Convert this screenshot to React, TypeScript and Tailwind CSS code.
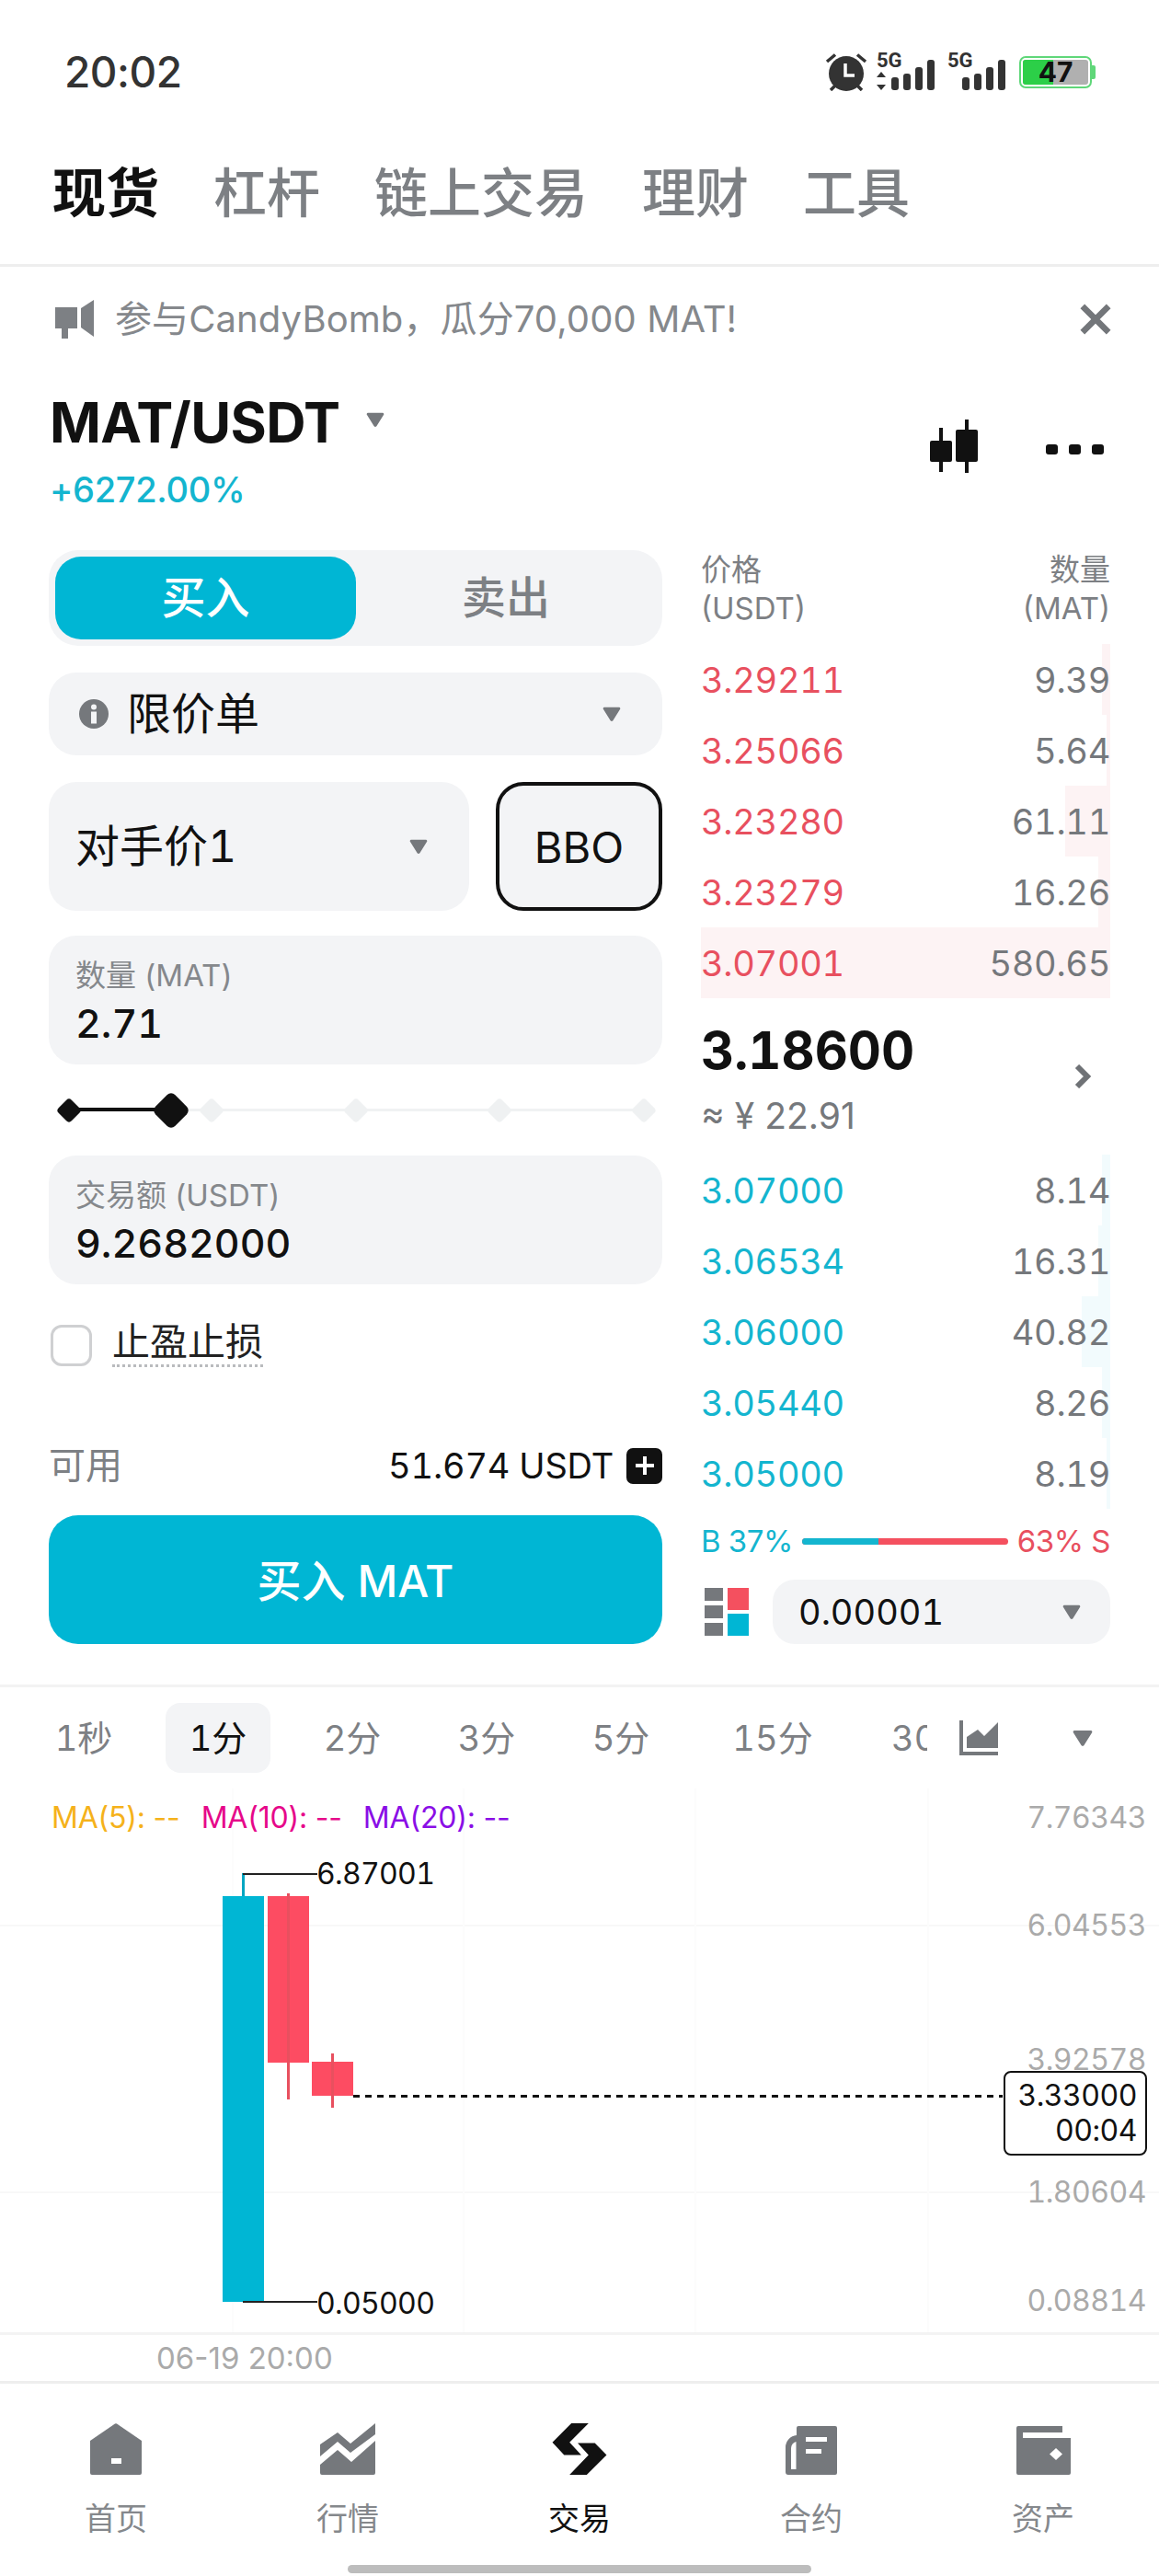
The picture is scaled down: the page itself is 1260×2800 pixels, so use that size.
import React from 'react';

const asks = [
  { price: '3.29211', qty: '9.39', depth: 'w-[2%]' },
  { price: '3.25066', qty: '5.64', depth: 'w-[1%]' },
  { price: '3.23280', qty: '61.11', depth: 'w-[11%]' },
  { price: '3.23279', qty: '16.26', depth: 'w-[3%]' },
  { price: '3.07001', qty: '580.65', depth: 'w-full' },
];

const bids = [
  { price: '3.07000', qty: '8.14', depth: 'w-[2%]' },
  { price: '3.06534', qty: '16.31', depth: 'w-[3%]' },
  { price: '3.06000', qty: '40.82', depth: 'w-[7%]' },
  { price: '3.05440', qty: '8.26', depth: 'w-[2%]' },
  { price: '3.05000', qty: '8.19', depth: 'w-[1%]' },
];

const intervals = [
  { label: '1秒', width: 'w-[146px]' },
  { label: '1分', width: 'w-[146px]', active: true },
  { label: '2分', width: 'w-[146px]' },
  { label: '3分', width: 'w-[146px]' },
  { label: '5分', width: 'w-[146px]' },
  { label: '15分', width: 'w-[184px]' },
];

function Caret({ className }: { className: string }) {
  return (
    <svg viewBox="0 0 22 20" className={className} fill="#75787c">
      <path d="M2 2h18a1.500 1.500 0 0 1 1 2.500L12.500 18a2 2 0 0 1-3 0L1 4.500A1.500 1.500 0 0 1 2 2z" />
    </svg>
  );
}

function Signal({ arrows }: { arrows?: boolean }) {
  return (
    <div className="relative w-[64px] h-[42px]">
      <span className="absolute left-0 top-0 text-[22px] leading-[18px] font-bold text-[#333] font-[Roboto,sans-serif]">5G</span>
      <svg viewBox="0 0 64 42" className="w-[64px] h-[42px]" fill="#333">
        {arrows && <path d="M5 21l5 6H0zM5 41l5-6H0z" />}
        <rect x="16" y="27" width="8" height="14" rx="3" />
        <rect x="29" y="23" width="8" height="18" rx="3" />
        <rect x="42" y="16" width="8" height="25" rx="3" />
        <rect x="55" y="8" width="8" height="33" rx="3" />
      </svg>
    </div>
  );
}

function StatusBar() {
  return (
    <div className="h-[156px] flex justify-between items-center pl-[70px] pr-[69px]">
      <span className="text-[46px] leading-none font-medium text-[#333] tracking-[-0.5px]">20:02</span>
      <div className="flex items-center">
        <svg viewBox="0 0 46 42" className="w-[46px] h-[42px] mr-[10px]" fill="#333">
          <circle cx="23" cy="23" r="19" />
          <path d="M2 10L11 2.500M44 10L35 2.500M6 41l5-5M40 41l-5-5" stroke="#333" strokeWidth="3.500" />
          <path d="M22 12v13h10" stroke="#fff" strokeWidth="3.500" fill="none" />
        </svg>
        <Signal arrows />
        <div className="w-[13px]" />
        <Signal />
        <div className="ml-[14px] flex items-center">
          <div className="relative w-[79px] h-[35px] border-2 border-[#5fd779] rounded-[7px] p-[2px]">
            <div className="w-full h-full rounded-[3px] bg-[#b0b0b0]">
              <div className="w-[47%] h-full rounded-l-[3px] bg-[#2ccf48]" />
            </div>
            <span className="absolute inset-0 flex items-center justify-center text-[30px] leading-none font-bold text-[#111]">
              47
            </span>
          </div>
          <div className="w-[4px] h-[15px] rounded-r-[2px] bg-[#5fd779]" />
        </div>
      </div>
    </div>
  );
}

function TopNav() {
  return (
    <div className="h-[134px] border-b-[3px] border-[#eeeeee] flex items-center gap-[59px] pl-[57px] pb-[24px] text-[58px] leading-none text-[#7d8084] font-medium">
      <span className="font-bold text-[#111]">现货</span>
      <span>杠杆</span>
      <span>链上交易</span>
      <span>理财</span>
      <span>工具</span>
    </div>
  );
}

function Banner() {
  return (
    <div className="h-[114px] flex items-center pl-[60px] pr-[52px]">
      <svg viewBox="0 0 42 42" className="w-[42px] h-[42px] mr-[23px]" fill="#7d8084">
        <path d="M0 8h24v23H14v11H7V31H0z" />
        <path d="M28 9L42 0v40L28 30z" />
      </svg>
      <span className="text-[40px] leading-none text-[#85888c] tracking-[0.1px] flex-1">参与CandyBomb，瓜分70,000 MAT!</span>
      <svg viewBox="0 0 36 36" className="w-[34px] h-[34px]" stroke="#73767a" strokeWidth="7">
        <path d="M3 3l30 30M33 3L3 33" />
      </svg>
    </div>
  );
}

function PairHeader() {
  return (
    <div className="h-[194px] flex justify-between pl-[54px] pr-[60px]">
      <div className="pt-[25px]">
        <div className="flex items-center h-[60px]">
          <span className="text-[60px] leading-none font-bold text-[#111] tracking-[-0.6px]">MAT/USDT</span>
          <Caret className="w-[20px] h-[18px] ml-[28px] mb-[6px]" />
        </div>
        <div className="text-[38px] leading-none font-medium text-[#14b5cf] tracking-[-0.3px] mt-[24px]">+6272.00%</div>
      </div>
      <div className="flex items-start gap-[72px] pt-[52px]">
        <svg viewBox="0 0 54 58" className="w-[54px] h-[58px]" fill="#111">
          <rect x="0" y="23" width="24" height="23" rx="2" />
          <rect x="10" y="9" width="4" height="48" />
          <rect x="28" y="11" width="24" height="35" rx="2" />
          <rect x="38" y="0" width="4" height="58" />
        </svg>
        <div className="flex gap-[12px] pt-[27px]">
          <div className="w-[13px] h-[11px] rounded-[3px] bg-[#111]" />
          <div className="w-[13px] h-[11px] rounded-[3px] bg-[#111]" />
          <div className="w-[13px] h-[11px] rounded-[3px] bg-[#111]" />
        </div>
      </div>
    </div>
  );
}

function OrderForm() {
  return (
    <div className="w-[667px] flex flex-col">
      <div className="h-[104px] rounded-[32px] bg-[#f3f4f6] p-[7px] flex items-stretch">
        <div className="w-[327px] rounded-[28px] bg-[#00b6d4] flex items-center justify-center text-[48px] leading-none text-white font-medium">
          买入
        </div>
        <div className="flex-1 flex items-center justify-center text-[48px] leading-none text-[#7d8084] font-medium">
          卖出
        </div>
      </div>

      <div className="mt-[29px] h-[90px] rounded-[30px] bg-[#f3f4f6] flex items-center pl-[33px] pr-[44px]">
        <svg viewBox="0 0 32 32" className="w-[32px] h-[32px]">
          <circle cx="16" cy="16" r="16" fill="#75787c" />
          <circle cx="16" cy="8.500" r="3" fill="#f3f4f6" />
          <rect x="13" y="13.500" width="6" height="13" fill="#f3f4f6" />
        </svg>
        <span className="ml-[20px] flex-1 text-[48px] leading-none text-[#111]">限价单</span>
        <Caret className="w-[22px] h-[18px]" />
      </div>

      <div className="mt-[29px] flex gap-[29px] h-[140px]">
        <div className="w-[457px] rounded-[30px] bg-[#f3f4f6] flex items-center justify-between pl-[29px] pr-[44px]">
          <span className="text-[48px] leading-none text-[#111] tabular-nums">对手价1</span>
          <Caret className="w-[22px] h-[18px]" />
        </div>
        <div className="flex-1 rounded-[30px] border-[4px] border-[#111] bg-[#f3f4f6] flex items-center justify-center text-[47px] leading-none text-[#111]">
          BBO
        </div>
      </div>

      <div className="mt-[27px] h-[140px] rounded-[30px] bg-[#f3f4f6] pl-[29px] pt-[27px]">
        <div className="text-[33px] leading-none text-[#85888c]">数量 (MAT)</div>
        <div className="mt-[14px] text-[43px] leading-none font-medium text-[#111] tabular-nums">2.71</div>
      </div>

      {/* slider: marks sit on the track at 0, 111, 155, 312, 468, 625 from the first one */}
      <div className="relative h-[99px] flex items-center pl-[22px]">
        <div className="absolute left-[22px] right-[20px] top-[48px] h-[3px] bg-[#f0f2f3]" />
        <div className="absolute left-[22px] w-[111px] top-[47px] h-[4px] bg-[#111]" />
        <div className="relative w-0 flex justify-center">
          <div className="shrink-0 w-[20px] h-[20px] rotate-45 rounded-[4px] bg-[#111]" />
        </div>
        <div className="relative w-0 flex justify-center ml-[111px]">
          <div className="shrink-0 w-[30px] h-[30px] rotate-45 rounded-[6px] bg-[#111]" />
        </div>
        <div className="relative w-0 flex justify-center ml-[44px]">
          <div className="shrink-0 w-[20px] h-[20px] rotate-45 rounded-[4px] bg-[#eff1f2]" />
        </div>
        <div className="relative w-0 flex justify-center ml-[157px]">
          <div className="shrink-0 w-[20px] h-[20px] rotate-45 rounded-[4px] bg-[#eff1f2]" />
        </div>
        <div className="relative w-0 flex justify-center ml-[156px]">
          <div className="shrink-0 w-[20px] h-[20px] rotate-45 rounded-[4px] bg-[#eff1f2]" />
        </div>
        <div className="relative w-0 flex justify-center ml-[157px]">
          <div className="shrink-0 w-[20px] h-[20px] rotate-45 rounded-[4px] bg-[#eff1f2]" />
        </div>
      </div>

      <div className="h-[140px] rounded-[30px] bg-[#f3f4f6] pl-[29px] pt-[27px]">
        <div className="text-[33px] leading-none text-[#85888c]">交易额 (USDT)</div>
        <div className="mt-[14px] text-[43px] leading-none font-medium text-[#111] tabular-nums">9.2682000</div>
      </div>

      <div className="mt-[42px] flex items-center pl-[2px]">
        <div className="w-[45px] h-[45px] rounded-[12px] border-[3px] border-[#cfd0d2] bg-white" />
        <span className="ml-[22px] pb-[4px] text-[41px] leading-none text-[#222] border-b-[3px] border-dotted border-[#b9bbbe]">止盈止损</span>
      </div>

      <div className="mt-[87px] flex items-center justify-between">
        <span className="text-[40px] leading-none text-[#7d8084]">可用</span>
        <div className="flex items-center">
          <span className="text-[38px] leading-none text-[#111] tracking-[-0.2px] tabular-nums">51.674 USDT</span>
          <div className="ml-[14px] w-[39px] h-[39px] rounded-[7px] bg-[#111] flex items-center justify-center">
            <svg viewBox="0 0 24 24" className="w-[24px] h-[24px]" stroke="#fff" strokeWidth="4">
              <path d="M12 2v20M2 12h20" />
            </svg>
          </div>
        </div>
      </div>

      <div className="mt-[34px] h-[140px] rounded-[32px] bg-[#00b6d4] flex items-center justify-center pt-[4px] text-[48px] leading-none text-white font-medium">
        买入 MAT
      </div>
    </div>
  );
}

function BookRow({ price, qty, depth, side }: { price: string; qty: string; depth: string; side: 'ask' | 'bid' }) {
  return (
    <div className="relative h-[77px] flex items-center justify-between text-[38px] leading-none tracking-[-0.3px] tabular-nums">
      <div className={`absolute right-0 top-0 bottom-0 ${depth} ${side === 'ask' ? 'bg-[#fdf3f4]' : 'bg-[#f2fbfd]'}`} />
      <span className={`relative ${side === 'ask' ? 'text-[#e8505f]' : 'text-[#14b5cf]'}`}>{price}</span>
      <span className="relative text-[#75787c]">{qty}</span>
    </div>
  );
}

function OrderBook() {
  return (
    <div className="w-[445px] flex flex-col">
      <div className="h-[102px] flex justify-between text-[33px] leading-[42px] text-[#7d8084]">
        <div>
          <div>价格</div>
          <div>(USDT)</div>
        </div>
        <div className="text-right">
          <div>数量</div>
          <div>(MAT)</div>
        </div>
      </div>
      {asks.map((row) => (
        <BookRow key={row.price} {...row} side="ask" />
      ))}
      <div className="h-[170px] relative pt-[29px]">
        <div className="text-[56px] leading-none font-bold text-[#111] tabular-nums">3.18600</div>
        <div className="mt-[23px] text-[39px] leading-none text-[#75787c]">≈ ¥ 22.91</div>
        <svg viewBox="0 0 20 26" className="absolute right-[19px] top-[72px] w-[20px] h-[26px]" fill="none" stroke="#6f7276" strokeWidth="6">
          <path d="M3 2l11 11L3 24" />
        </svg>
      </div>
      {bids.map((row) => (
        <BookRow key={row.price} {...row} side="bid" />
      ))}
      <div className="mt-[15px] h-[40px] flex items-center text-[33px] leading-none tracking-[-0.5px]">
        <span className="text-[#14b5cf]">B 37%</span>
        <div className="mx-[10px] flex-1 h-[7px] rounded-full overflow-hidden flex bg-[#f4505f]">
          <div className="w-[37%] h-full bg-[#14b5cf]" />
        </div>
        <span className="text-[#e8505f]">63% S</span>
      </div>
      <div className="mt-[22px] flex items-center h-[70px]">
        <svg viewBox="0 0 48 52" className="w-[48px] h-[52px] ml-[4px]">
          <rect x="0" y="0" width="20" height="14" fill="#75787c" />
          <rect x="0" y="19" width="20" height="14" fill="#75787c" />
          <rect x="0" y="38" width="20" height="14" fill="#75787c" />
          <rect x="25" y="0" width="23" height="24" fill="#f4505f" />
          <rect x="25" y="28" width="23" height="24" fill="#00b6d4" />
        </svg>
        <div className="ml-[26px] flex-1 h-[70px] rounded-[24px] bg-[#f3f4f6] flex items-center justify-between pl-[28px] pr-[31px]">
          <span className="text-[38px] leading-none text-[#111] tabular-nums">0.00001</span>
          <Caret className="w-[22px] h-[18px]" />
        </div>
      </div>
    </div>
  );
}

function IntervalBar() {
  return (
    <div className="h-[110px] flex items-center">
      <div className="w-[1008px] overflow-hidden flex items-center pl-[18px] shrink-0">
        {intervals.map((item) => (
          <div key={item.label} className={`${item.width} shrink-0 flex justify-center`}>
            <span
              className={
                item.active
                  ? 'w-[114px] h-[76px] rounded-[16px] bg-[#f3f4f6] flex items-center justify-center text-[38px] leading-none text-[#111] tabular-nums'
                  : 'h-[76px] flex items-center text-[38px] leading-none text-[#7d8084] tabular-nums'
              }
            >
              {item.label}
            </span>
          </div>
        ))}
        <span className="shrink-0 ml-[37px] text-[38px] leading-none text-[#7d8084] tabular-nums">30分</span>
      </div>
      <svg viewBox="0 0 42 38" className="ml-[35px] w-[42px] h-[38px]" fill="#75787c">
        <path d="M0 0h4v34h38v4H0z" />
        <path d="M8 30V18l12-8 7 7L42 2v28z" />
      </svg>
      <Caret className="ml-[81px] w-[22px] h-[20px]" />
    </div>
  );
}

function Chart() {
  return (
    <div className="relative h-[594px] border-b-[3px] border-[#f3f3f3] overflow-hidden">
      {/* top of this canvas sits at y=1943 */}
      <div className="absolute left-0 right-0 top-[148px] h-[2px] bg-[#f8f8f8]" />
      <div className="absolute left-0 right-0 top-[438px] h-[2px] bg-[#f8f8f8]" />
      <div className="absolute top-0 bottom-0 left-[252px] w-[2px] bg-[#fcfcfc]" />
      <div className="absolute top-0 bottom-0 left-[503px] w-[2px] bg-[#fcfcfc]" />
      <div className="absolute top-0 bottom-0 left-[755px] w-[2px] bg-[#fcfcfc]" />
      <div className="absolute top-0 bottom-0 left-[1008px] w-[2px] bg-[#fcfcfc]" />

      <div className="absolute left-[56px] top-[15px] flex gap-[23px] text-[32px] leading-[34px] tracking-[-0.2px]">
        <span className="text-[#f5b21b]">MA(5): --</span>
        <span className="text-[#e6088a]">MA(10): --</span>
        <span className="text-[#8a0ee6]">MA(20): --</span>
      </div>

      <span className="absolute right-[14px] top-[15px] text-[32px] leading-[34px] tracking-[-0.5px] text-[#aaaaaa] tabular-nums">7.76343</span>
      <span className="absolute right-[14px] top-[132px] text-[32px] leading-[34px] tracking-[-0.5px] text-[#aaaaaa] tabular-nums">6.04553</span>
      <span className="absolute right-[14px] top-[278px] text-[32px] leading-[34px] tracking-[-0.5px] text-[#aaaaaa] tabular-nums">3.92578</span>
      <span className="absolute right-[14px] top-[422px] text-[32px] leading-[34px] tracking-[-0.5px] text-[#aaaaaa] tabular-nums">1.80604</span>
      <span className="absolute right-[14px] top-[540px] text-[32px] leading-[34px] tracking-[-0.5px] text-[#aaaaaa] tabular-nums">0.08814</span>

      <div className="absolute left-[242px] top-[117px] w-[45px] h-[441px] bg-[#00b6d4]" />
      <div className="absolute left-[263px] top-[92px] w-[3px] h-[25px] bg-[#00a6c2]" />
      <div className="absolute left-[264px] top-[92px] w-[81px] h-[2px] bg-[#222]" />
      <div className="absolute left-[264px] top-[557px] w-[81px] h-[2px] bg-[#222]" />
      <span className="absolute left-[344px] top-[76px] text-[32px] leading-[34px] tracking-[-0.7px] text-[#111] tabular-nums">6.87001</span>
      <span className="absolute left-[344px] top-[543px] text-[32px] leading-[34px] tracking-[-0.7px] text-[#111] tabular-nums">0.05000</span>

      <div className="absolute left-[291px] top-[117px] w-[45px] h-[181px] bg-[#fd4c62]" />
      <div className="absolute left-[312px] top-[114px] w-[3px] h-[224px] bg-[#e8505f]" />
      <div className="absolute left-[339px] top-[297px] w-[45px] h-[37px] bg-[#fd4c62]" />
      <div className="absolute left-[360px] top-[288px] w-[3px] h-[59px] bg-[#e8505f]" />

      <div className="absolute left-[384px] right-[170px] top-[333px] h-[3px] bg-[repeating-linear-gradient(90deg,#111_0_7px,transparent_7px_13px)]" />
      <div className="absolute left-[1091px] w-[156px] top-[307px] h-[92px] rounded-[8px] border-2 border-[#111] bg-white flex flex-col items-end justify-center pr-[9px] text-[32px] leading-[38px] tracking-[-0.5px] text-[#111] tabular-nums">
        <span>3.33000</span>
        <span>00:04</span>
      </div>
    </div>
  );
}

function TabBar() {
  const gray = '#75787c';
  return (
    <div className="h-[210px] flex flex-col">
      <div className="flex-1 grid grid-cols-5">
        <div className="flex flex-col items-center pt-[43px]">
          <svg viewBox="0 0 56 56" className="w-[56px] h-[56px]" fill={gray}>
            <path d="M27 .5a2 2 0 0 1 2 0L56 19v35a2 2 0 0 1-2 2H2a2 2 0 0 1-2-2V19z" />
            <rect x="23" y="38" width="11" height="6" fill="#fff" />
          </svg>
          <span className="mt-[31px] text-[34px] leading-none text-[#85888c]">首页</span>
        </div>
        <div className="flex flex-col items-center pt-[43px]">
          <svg viewBox="0 0 60 56" className="w-[60px] h-[56px]" fill={gray}>
            <path d="M0 36V23L19 10l14 12L60 0v12L33 32 19 20z" />
            <path d="M0 45l19-16 15 13 26-23v35a2 2 0 0 1-2 2H2a2 2 0 0 1-2-2z" />
          </svg>
          <span className="mt-[31px] text-[34px] leading-none text-[#85888c]">行情</span>
        </div>
        <div className="flex flex-col items-center pt-[43px]">
          <svg viewBox="0 0 60 57" className="w-[60px] h-[56px]" fill="#111">
            <path d="M21 0h19L19 21l13 14H13L0 21z" />
            <path d="M28 22h19l13 13-22 22H19l21-22z" />
          </svg>
          <span className="mt-[31px] text-[34px] leading-none text-[#111]">交易</span>
        </div>
        <div className="flex flex-col items-center pt-[46px]">
          <svg viewBox="0 0 56 53" className="w-[56px] h-[53px]" fill={gray}>
            <path d="M12 2a2 2 0 0 1 2-2h40a2 2 0 0 1 2 2v49a2 2 0 0 1-2 2H3a3 3 0 0 1-3-3V23a13 13 0 0 1 12-13z" />
            <path d="M6 47V24a8 8 0 0 1 5.500-7V47z" fill="#fff" />
            <rect x="22" y="12" width="23" height="5" fill="#fff" />
            <rect x="22" y="25" width="17" height="5" fill="#fff" />
          </svg>
          <span className="mt-[31px] text-[34px] leading-none text-[#85888c]">合约</span>
        </div>
        <div className="flex flex-col items-center pt-[46px]">
          <svg viewBox="0 0 59 53" className="w-[59px] h-[53px]" fill={gray}>
            <path d="M0 2a2 2 0 0 1 2-2h48v7H7v6h52v38a2 2 0 0 1-2 2H2a2 2 0 0 1-2-2z" />
            <path d="M43 24l7 6.500-7 6.500-7-6.500z" fill="#fff" />
          </svg>
          <span className="mt-[31px] text-[34px] leading-none text-[#85888c]">资产</span>
        </div>
      </div>
      <div className="self-center w-[504px] h-[9px] rounded-full bg-[#bdbdbd] mb-[4px]" />
    </div>
  );
}

export default function App() {
  return (
    <div className="w-[1260px] h-[2800px] overflow-hidden bg-white font-[Inter,'Noto_Sans_CJK_SC',sans-serif]">
      <StatusBar />
      <TopNav />
      <Banner />
      <PairHeader />
      <div className="flex justify-between pl-[53px] pr-[53px]">
        <OrderForm />
        <OrderBook />
      </div>
      <div className="mt-[44px] h-[3px] bg-[#f3f3f3]" />
      <IntervalBar />
      <Chart />
      <div className="h-[53px] border-b-[3px] border-[#eeeeee] pl-[170px] pt-[9px] text-[33px] leading-none text-[#aaaaaa]">06-19 20:00</div>
      <TabBar />
    </div>
  );
}
